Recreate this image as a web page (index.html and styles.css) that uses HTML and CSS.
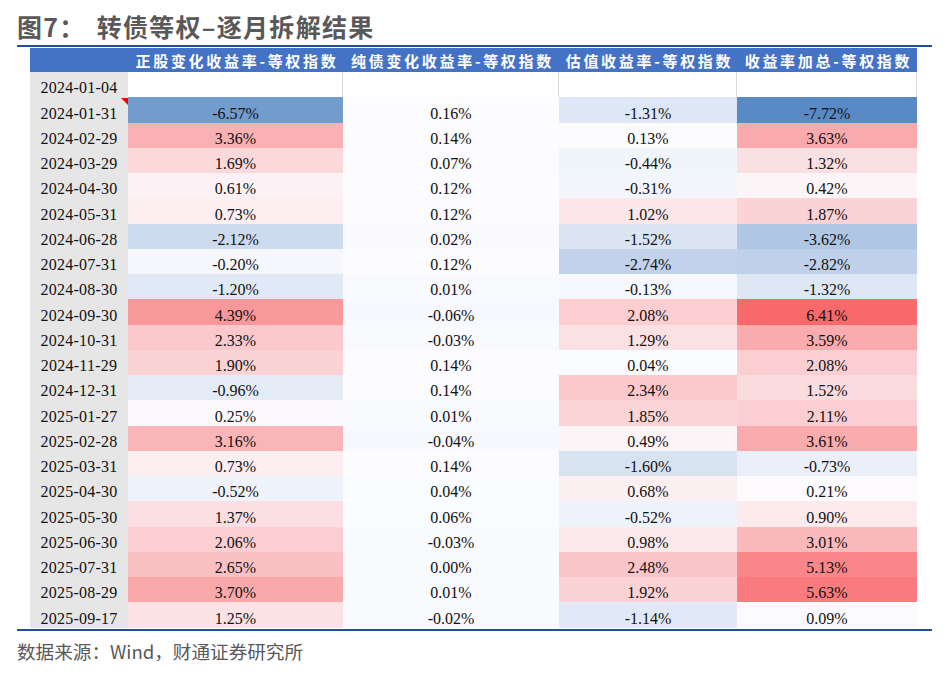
FILE: index.html
```html
<!DOCTYPE html>
<html lang="zh-CN">
<head>
<meta charset="utf-8">
<title>转债等权-逐月拆解结果</title>
<link rel="stylesheet" href="styles.css">
</head>
<body>
<div class="page">
  <h1 class="title"><span>图7：</span><span class="title-main">转债等权–逐月拆解结果</span></h1>
  <div class="rule rule-top"></div>
  <div class="grid">
    <div class="hd"></div>
    <div class="hd"><span>正股变化收益率-等权指数</span></div>
    <div class="hd"><span>纯债变化收益率-等权指数</span></div>
    <div class="hd"><span>估值收益率-等权指数</span></div>
    <div class="hd"><span>收益率加总-等权指数</span></div>

    <div class="date">2024-01-04</div>
    <div class="v empty"></div><div class="v empty"></div><div class="v empty"></div><div class="v empty"></div>

    <div class="date has-note">2024-01-31<i class="note"></i></div>
    <div class="v" style="background:rgb(114,155,206)">-6.57%</div>
    <div class="v" style="background:rgb(252,252,254)">0.16%</div>
    <div class="v" style="background:rgb(222,231,245)">-1.31%</div>
    <div class="v" style="background:rgb(90,138,198)">-7.72%</div>

    <div class="date">2024-02-29</div>
    <div class="v" style="background:rgb(250,177,179)">3.36%</div>
    <div class="v" style="background:rgb(252,252,255)">0.14%</div>
    <div class="v" style="background:rgb(252,252,255)">0.13%</div>
    <div class="v" style="background:rgb(250,170,173)">3.63%</div>

    <div class="date">2024-03-29</div>
    <div class="v" style="background:rgb(251,216,218)">1.69%</div>
    <div class="v" style="background:rgb(251,251,254)">0.07%</div>
    <div class="v" style="background:rgb(240,244,251)">-0.44%</div>
    <div class="v" style="background:rgb(251,224,227)">1.32%</div>

    <div class="date">2024-04-30</div>
    <div class="v" style="background:rgb(252,241,244)">0.61%</div>
    <div class="v" style="background:rgb(252,252,255)">0.12%</div>
    <div class="v" style="background:rgb(243,245,252)">-0.31%</div>
    <div class="v" style="background:rgb(252,245,248)">0.42%</div>

    <div class="date">2024-05-31</div>
    <div class="v" style="background:rgb(252,238,241)">0.73%</div>
    <div class="v" style="background:rgb(252,252,255)">0.12%</div>
    <div class="v" style="background:rgb(251,231,234)">1.02%</div>
    <div class="v" style="background:rgb(251,211,214)">1.87%</div>

    <div class="date">2024-06-28</div>
    <div class="v" style="background:rgb(205,219,239)">-2.12%</div>
    <div class="v" style="background:rgb(250,250,254)">0.02%</div>
    <div class="v" style="background:rgb(218,228,243)">-1.52%</div>
    <div class="v" style="background:rgb(175,198,228)">-3.62%</div>

    <div class="date">2024-07-31</div>
    <div class="v" style="background:rgb(245,247,253)">-0.20%</div>
    <div class="v" style="background:rgb(252,252,255)">0.12%</div>
    <div class="v" style="background:rgb(193,210,234)">-2.74%</div>
    <div class="v" style="background:rgb(191,209,234)">-2.82%</div>

    <div class="date">2024-08-30</div>
    <div class="v" style="background:rgb(224,233,245)">-1.20%</div>
    <div class="v" style="background:rgb(249,250,254)">0.01%</div>
    <div class="v" style="background:rgb(246,248,253)">-0.13%</div>
    <div class="v" style="background:rgb(222,231,244)">-1.32%</div>

    <div class="date">2024-09-30</div>
    <div class="v" style="background:rgb(249,152,155)">4.39%</div>
    <div class="v" style="background:rgb(248,249,254)">-0.06%</div>
    <div class="v" style="background:rgb(251,207,209)">2.08%</div>
    <div class="v" style="background:rgb(248,105,107)">6.41%</div>

    <div class="date">2024-10-31</div>
    <div class="v" style="background:rgb(251,201,203)">2.33%</div>
    <div class="v" style="background:rgb(248,250,254)">-0.03%</div>
    <div class="v" style="background:rgb(251,225,228)">1.29%</div>
    <div class="v" style="background:rgb(250,171,174)">3.59%</div>

    <div class="date">2024-11-29</div>
    <div class="v" style="background:rgb(251,211,213)">1.90%</div>
    <div class="v" style="background:rgb(252,252,255)">0.14%</div>
    <div class="v" style="background:rgb(250,251,254)">0.04%</div>
    <div class="v" style="background:rgb(251,207,209)">2.08%</div>

    <div class="date">2024-12-31</div>
    <div class="v" style="background:rgb(229,236,247)">-0.96%</div>
    <div class="v" style="background:rgb(252,252,255)">0.14%</div>
    <div class="v" style="background:rgb(251,200,203)">2.34%</div>
    <div class="v" style="background:rgb(251,220,222)">1.52%</div>

    <div class="date">2025-01-27</div>
    <div class="v" style="background:rgb(252,249,252)">0.25%</div>
    <div class="v" style="background:rgb(249,250,254)">0.01%</div>
    <div class="v" style="background:rgb(251,212,215)">1.85%</div>
    <div class="v" style="background:rgb(251,206,209)">2.11%</div>

    <div class="date">2025-02-28</div>
    <div class="v" style="background:rgb(250,181,184)">3.16%</div>
    <div class="v" style="background:rgb(248,249,254)">-0.04%</div>
    <div class="v" style="background:rgb(252,244,247)">0.49%</div>
    <div class="v" style="background:rgb(250,171,173)">3.61%</div>

    <div class="date">2025-03-31</div>
    <div class="v" style="background:rgb(252,238,241)">0.73%</div>
    <div class="v" style="background:rgb(252,252,255)">0.14%</div>
    <div class="v" style="background:rgb(216,227,242)">-1.60%</div>
    <div class="v" style="background:rgb(234,239,249)">-0.73%</div>

    <div class="date">2025-04-30</div>
    <div class="v" style="background:rgb(238,242,250)">-0.52%</div>
    <div class="v" style="background:rgb(250,251,254)">0.04%</div>
    <div class="v" style="background:rgb(252,239,242)">0.68%</div>
    <div class="v" style="background:rgb(252,250,253)">0.21%</div>

    <div class="date">2025-05-30</div>
    <div class="v" style="background:rgb(251,223,226)">1.37%</div>
    <div class="v" style="background:rgb(250,251,254)">0.06%</div>
    <div class="v" style="background:rgb(238,242,250)">-0.52%</div>
    <div class="v" style="background:rgb(252,234,237)">0.90%</div>

    <div class="date">2025-06-30</div>
    <div class="v" style="background:rgb(251,207,210)">2.06%</div>
    <div class="v" style="background:rgb(248,250,254)">-0.03%</div>
    <div class="v" style="background:rgb(251,232,235)">0.98%</div>
    <div class="v" style="background:rgb(250,185,187)">3.01%</div>

    <div class="date">2025-07-31</div>
    <div class="v" style="background:rgb(250,193,196)">2.65%</div>
    <div class="v" style="background:rgb(249,250,254)">0.00%</div>
    <div class="v" style="background:rgb(250,197,200)">2.48%</div>
    <div class="v" style="background:rgb(249,135,137)">5.13%</div>

    <div class="date">2025-08-29</div>
    <div class="v" style="background:rgb(250,169,171)">3.70%</div>
    <div class="v" style="background:rgb(249,250,254)">0.01%</div>
    <div class="v" style="background:rgb(251,210,213)">1.92%</div>
    <div class="v" style="background:rgb(249,123,125)">5.63%</div>

    <div class="date">2025-09-17</div>
    <div class="v" style="background:rgb(251,226,229)">1.25%</div>
    <div class="v" style="background:rgb(249,250,254)">-0.02%</div>
    <div class="v" style="background:rgb(226,233,246)">-1.14%</div>
    <div class="v" style="background:rgb(251,251,255)">0.09%</div>
  </div>
  <div class="rule rule-bottom"></div>
  <p class="source">数据来源：Wind，财通证券研究所</p>
</div>
</body>
</html>
```

FILE: styles.css
```css
* { box-sizing: border-box; }

html, body {
  margin: 0;
  padding: 0;
  background: #ffffff;
}

.page {
  width: 915px;
  margin-left: 17px;
  padding-top: 11px;
}

.title {
  margin: 0;
  font-family: "Noto Sans CJK SC", "Noto Sans", sans-serif;
  font-size: 25px;
  font-weight: 700;
  line-height: 30px;
  height: 30px;
  color: #595959;
  white-space: nowrap;
  letter-spacing: 1.3px;
}

.title-main {
  margin-left: 11px;
}

.rule {
  height: 2px;
  background: #1d4f91;
}

.rule-top {
  margin-top: 4px;
}

.rule-bottom {
  margin-top: 1px;
}

.grid {
  margin-top: 1px;
  margin-left: 13px;
  width: 887px;
  display: grid;
  grid-template-columns: 98px 215px 216px 178px 180px;
  grid-template-rows: 24px repeat(22, 25.25px);
}

.hd {
  background: #4472c4;
  color: #ffffff;
  font-family: "Noto Sans CJK SC", "Noto Sans", sans-serif;
  font-weight: 700;
  font-size: 15px;
  letter-spacing: 2.7px;
  white-space: nowrap;
  display: flex;
  align-items: center;
  justify-content: center;
  padding-top: 1px;
  padding-left: 3px;
  overflow: visible;
}

.date {
  position: relative;
  background: #e6e6e6;
  font-family: "Liberation Serif", "Times New Roman", serif;
  font-size: 16px;
  letter-spacing: 0.25px;
  line-height: 18px;
  color: #111111;
  display: flex;
  align-items: flex-end;
  justify-content: center;
}

.v {
  font-family: "Liberation Serif", "Times New Roman", serif;
  font-size: 16px;
  line-height: 18px;
  color: #111111;
  display: flex;
  align-items: flex-end;
  justify-content: center;
}

.v.empty {
  background: #ffffff;
  border-right: 1px solid #dadada;
}

.note {
  position: absolute;
  top: 1px;
  right: 0;
  width: 0;
  height: 0;
  border-top: 7px solid #ff0000;
  border-left: 7px solid transparent;
}

.source {
  margin: 8px 0 0 0;
  font-family: "Noto Sans CJK SC", "Noto Sans", sans-serif;
  font-size: 18.6px;
  line-height: 24px;
  color: #595959;
  white-space: nowrap;
}
```
